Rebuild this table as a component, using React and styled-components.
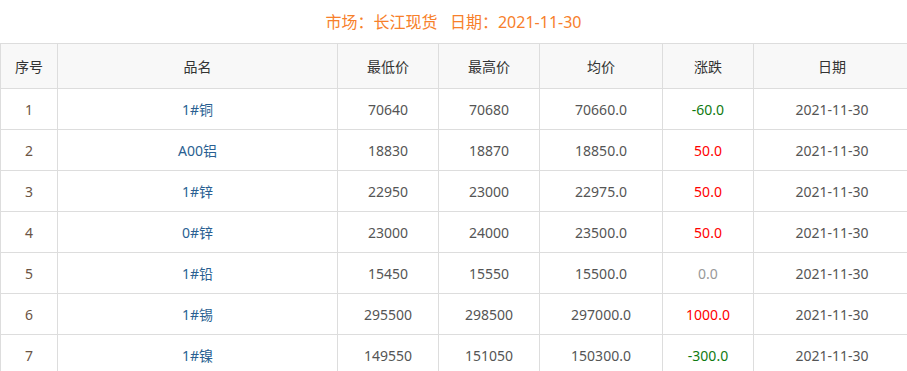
import React from 'react';
import styled, { createGlobalStyle } from 'styled-components';

const GlobalStyle = createGlobalStyle`
    html, body {
        margin: 0;
        padding: 0;
        background: #fff;
        overflow: hidden;
    }
    body {
        font-family: "Noto Sans", "Noto Sans CJK SC", sans-serif;
    }
`

const Page = styled.div`
    width: 907px;
    overflow: hidden;
`

const Title = styled.h3`
    margin: 0;
    height: 43px;
    line-height: 44px;
    text-align: center;
    font-size: 16px;
    font-weight: normal;
    color: #f7802b;
    white-space: pre;
`

const Table = styled.table`
    width: 910px;
    border-collapse: collapse;
    table-layout: fixed;
    font-size: 14px;
    color: #555;
`

const Th = styled.th`
    height: 44px;
    padding: 0;
    background: #f8f8f8;
    border: 1px solid #ddd;
    font-weight: normal;
    color: #333;
    text-align: center;
`

const Td = styled.td`
    height: 40px;
    padding: 0;
    border: 1px solid #ddd;
    text-align: center;
    color: ${p => p.$color || '#555'};
`

const trendColor = (v) => {
    if (v > 0) return '#ff0000';
    if (v < 0) return '#117a11';
    return '#999';
}

const rows = [
    { id: 1, name: '1#铜', low: 70640, high: 70680, avg: '70660.0', diff: -60 },
    { id: 2, name: 'A00铝', low: 18830, high: 18870, avg: '18850.0', diff: 50 },
    { id: 3, name: '1#锌', low: 22950, high: 23000, avg: '22975.0', diff: 50 },
    { id: 4, name: '0#锌', low: 23000, high: 24000, avg: '23500.0', diff: 50 },
    { id: 5, name: '1#铅', low: 15450, high: 15550, avg: '15500.0', diff: 0 },
    { id: 6, name: '1#锡', low: 295500, high: 298500, avg: '297000.0', diff: 1000 },
    { id: 7, name: '1#镍', low: 149550, high: 151050, avg: '150300.0', diff: -300 },
]

const widths = [57, 280, 101, 101, 123, 91, 157]

export default function App() {
    return (
        <Page>
            <GlobalStyle />
            <Title>{'市场：长江现货   日期：2021-11-30'}</Title>
            <Table>
                <colgroup>
                    {widths.map((w, i) => <col key={i} style={{ width: w }} />)}
                </colgroup>
                <thead>
                    <tr>
                        <Th>序号</Th>
                        <Th>品名</Th>
                        <Th>最低价</Th>
                        <Th>最高价</Th>
                        <Th>均价</Th>
                        <Th>涨跌</Th>
                        <Th>日期</Th>
                    </tr>
                </thead>
                <tbody>
                    {rows.map(r => (
                        <tr key={r.id}>
                            <Td $color="#6b5444">{r.id}</Td>
                            <Td $color="#2a5f92">{r.name}</Td>
                            <Td>{r.low}</Td>
                            <Td>{r.high}</Td>
                            <Td>{r.avg}</Td>
                            <Td $color={trendColor(r.diff)}>{r.diff.toFixed(1)}</Td>
                            <Td>2021-11-30</Td>
                        </tr>
                    ))}
                </tbody>
            </Table>
        </Page>
    )
}
